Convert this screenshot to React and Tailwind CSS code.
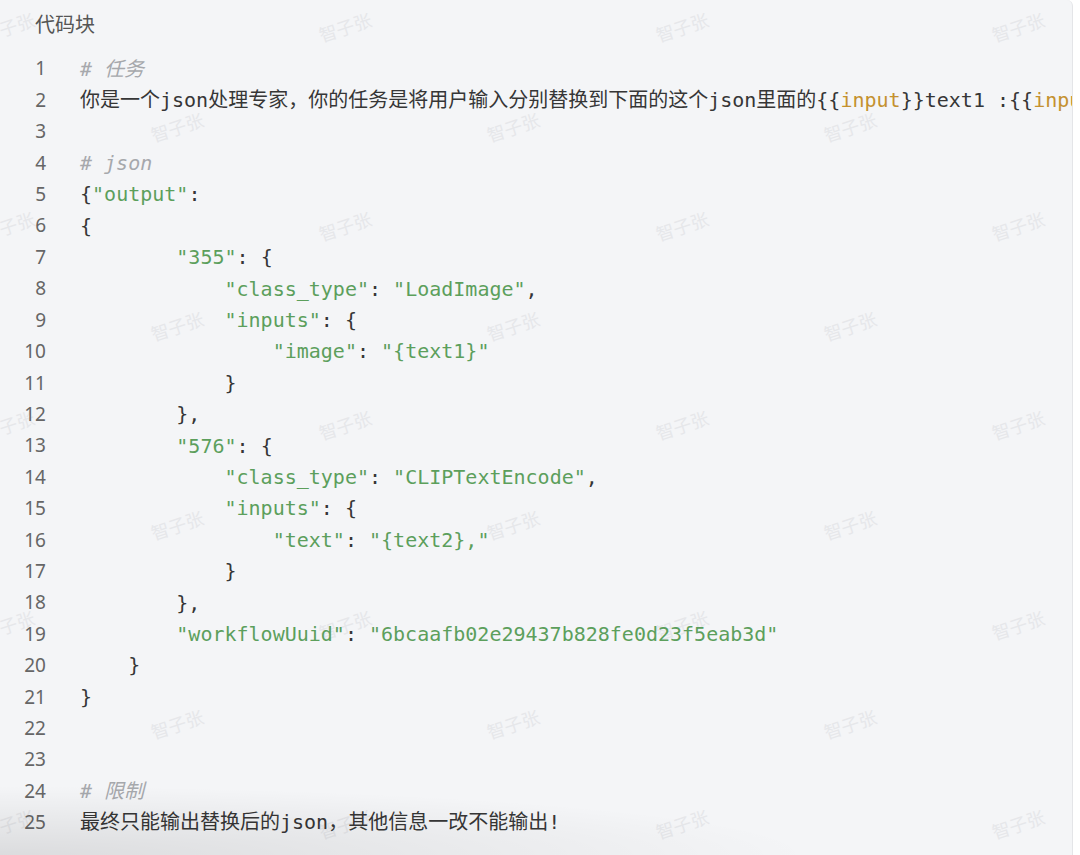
import React from 'react';

const C = ({ children }) => <span className="italic text-[#a6a8ac]">{children}</span>;
const S = ({ children }) => <span className="text-[#5c9f5c]">{children}</span>;
const V = ({ children }) => <span className="text-[#c4912f]">{children}</span>;

const lines = [
  <C># 任务</C>,
  <>你是一个json处理专家，你的任务是将用户输入分别替换到下面的这个json里面的{'{{'}<V>input</V>{'}}'}text1 :{'{{'}<V>input</V>{'}}'}text2</>,
  '',
  <C># json</C>,
  <>{'{'}<S>"output"</S>:</>,
  '{',
  <>{'        '}<S>"355"</S>: {'{'}</>,
  <>{'            '}<S>"class_type"</S>: <S>"LoadImage"</S>,</>,
  <>{'            '}<S>"inputs"</S>: {'{'}</>,
  <>{'                '}<S>"image"</S>: <S>"{'{'}text1{'}'}"</S></>,
  <>{'            }'}</>,
  <>{'        },'}</>,
  <>{'        '}<S>"576"</S>: {'{'}</>,
  <>{'            '}<S>"class_type"</S>: <S>"CLIPTextEncode"</S>,</>,
  <>{'            '}<S>"inputs"</S>: {'{'}</>,
  <>{'                '}<S>"text"</S>: <S>"{'{'}text2{'}'},"</S></>,
  <>{'            }'}</>,
  <>{'        },'}</>,
  <>{'        '}<S>"workflowUuid"</S>: <S>"6bcaafb02e29437b828fe0d23f5eab3d"</S></>,
  <>{'    }'}</>,
  '}',
  '',
  '',
  <C># 限制</C>,
  '最终只能输出替换后的json，其他信息一改不能输出!',
];

// watermark grid: alternating rows, ~100px apart
const marks = [];
for (let r = 0; r < 9; r++) {
  const y = 27 + r * 99.6;
  const xs = r % 2 === 0 ? [8, 345, 682, 1018] : [177, 513, 850];
  xs.forEach((x) => marks.push({ x, y }));
}

export default function App() {
  return (
    <div className="w-[1080px] h-[855px] bg-white overflow-hidden">
      <div className="relative w-[1073px] h-[855px] bg-[#f4f5f7] border-r border-[#e4e5e8] rounded-tr-[6px] overflow-hidden">
        {/* watermark sits under the code */}
        {marks.map((m, i) => (
          <span
            key={i}
            className="absolute -translate-x-1/2 -translate-y-1/2 -rotate-[18deg] text-[18px] text-[#e6e7ea] font-['Noto_Sans_CJK_SC',sans-serif] select-none pointer-events-none"
            style={{ left: m.x, top: m.y }}
          >
            智子张
          </span>
        ))}

        <div className="relative h-[48px] flex items-center px-[35px] text-[20px] text-[#555] font-['Noto_Sans_CJK_SC',sans-serif]">
          代码块
        </div>
        <div className="relative pt-[5px]">
          {lines.map((line, i) => (
            <div key={i} className="flex h-[31.42px] items-center">
              <div className="w-[46px] shrink-0 text-right text-[19px] text-[#666] font-['Noto_Sans',sans-serif]">
                {i + 1}
              </div>
              <div className="ml-[34px] whitespace-pre text-[20px] text-[#363636] font-['DejaVu_Sans_Mono','Noto_Sans_CJK_SC',monospace]">
                {line}
              </div>
            </div>
          ))}
        </div>

        <div className="absolute left-0 bottom-0 w-[820px] h-[70px] pointer-events-none bg-[radial-gradient(ellipse_at_bottom_left,rgba(0,0,0,0.1),rgba(0,0,0,0)_70%)]" />
      </div>
    </div>
  );
}
